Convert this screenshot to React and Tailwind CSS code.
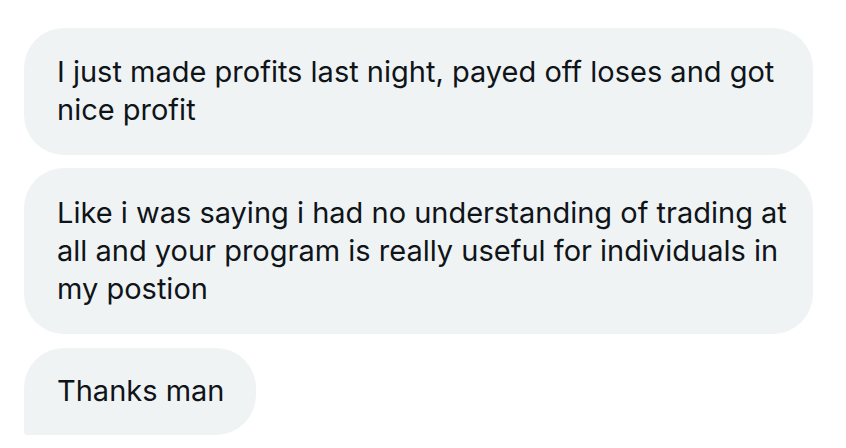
export default function App() {
  const font = { fontFamily: "Inter, 'Open Sans', sans-serif" };
  return (
    <div className="w-[846px] h-[448px] bg-white overflow-hidden pt-[28px] pl-[24px]" style={font}>
      <div className="flex flex-col items-start gap-[13px]">
        <div className="w-[789px] h-[127px] bg-[#eff3f4] rounded-[40px] pl-[33px] pr-[20px] pt-[25px] text-[29px] leading-[38px] text-[#0f1419] whitespace-nowrap">
          I just made profits last night, payed off loses and got<br />nice profit
        </div>
        <div className="w-[789px] h-[166px] bg-[#eff3f4] rounded-[40px] pl-[33px] pr-[20px] pt-[26px] text-[29px] leading-[38px] text-[#0f1419] whitespace-nowrap">
          Like i was saying i had no understanding of trading at<br />all and your program is really useful for individuals in<br />my postion
        </div>
        <div className="w-[232px] h-[87px] mt-[1px] bg-[#eff3f4] rounded-[40px] rounded-bl-[4px] pl-[33px] pt-[24px] text-[29px] leading-[38px] text-[#0f1419] whitespace-nowrap">
          Thanks man
        </div>
      </div>
    </div>
  );
}
